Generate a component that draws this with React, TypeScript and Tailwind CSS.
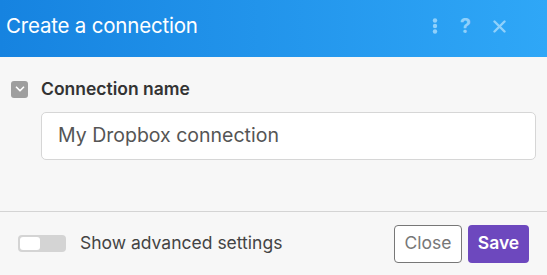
import { ChevronDown } from "lucide-react";

export default function App() {
  return (
    <div className="flex h-[275px] w-[547px] flex-col bg-[#f7f7f7] font-['Inter',sans-serif]">
      <header className="flex h-[57px] shrink-0 items-center bg-gradient-to-r from-[#1683e0] to-[#2fa7f7] pb-[5px] pl-[6px] pr-[41px]">
        <h1 className="flex-1 font-['Inter',sans-serif] text-[20.5px] font-normal leading-none tracking-[-0.2px] text-white">
          Create a connection
        </h1>
        <div className="flex items-center gap-[22px] text-[#8fd0fb]">
          <svg width="6" height="16" viewBox="0 0 6 16" aria-hidden="true">
            <circle cx="3" cy="2.5" r="2.2" fill="currentColor" />
            <circle cx="3" cy="8" r="2.2" fill="currentColor" />
            <circle cx="3" cy="13.5" r="2.2" fill="currentColor" />
          </svg>
          <span className="text-[20px] font-bold leading-none">?</span>
          <svg width="13" height="13" viewBox="0 0 13 13" aria-hidden="true">
            <path d="M1.5 1.5L11.5 11.5M11.5 1.5L1.5 11.5" stroke="currentColor" strokeWidth="2.4" strokeLinecap="round" />
          </svg>
        </div>
      </header>

      <main className="flex-1 pl-[11px] pr-[11px] pt-[22px]">
        <div className="flex items-center gap-[13px]">
          <span className="flex size-[17px] items-center justify-center rounded-[3px] bg-[#9e9e9e]">
            <ChevronDown className="size-[14px] text-white" strokeWidth={3} />
          </span>
          <span className="text-[17.5px] font-semibold leading-[20px] text-[#333]">Connection name</span>
        </div>
        <div className="ml-[30px] mt-[13px] flex h-[48px] items-center rounded-[5px] border border-[#d6d6d6] bg-white pl-[16px]">
          <span className="text-[19.5px] text-[#555]">My Dropbox connection</span>
        </div>
      </main>

      <footer className="flex h-[64px] shrink-0 items-center border-t border-[#d4d4d4] pl-[18px] pr-[18px]">
        <div className="flex h-[17px] w-[48px] items-center rounded-[4px] bg-[#d4d4d4] p-[2px]">
          <div className="h-[13px] w-[20px] rounded-[3px] bg-white" />
        </div>
        <span className="ml-[14px] flex-1 text-[17.5px] text-[#444]">Show advanced settings</span>
        <button className="h-[38px] w-[68px] rounded-[4px] border border-[#777] bg-white text-[17.5px] text-[#777]">
          Close
        </button>
        <button className="ml-[6px] h-[38px] w-[61px] rounded-[4px] bg-[#6d48be] text-[17.5px] font-semibold text-white">
          Save
        </button>
      </footer>
    </div>
  );
}
